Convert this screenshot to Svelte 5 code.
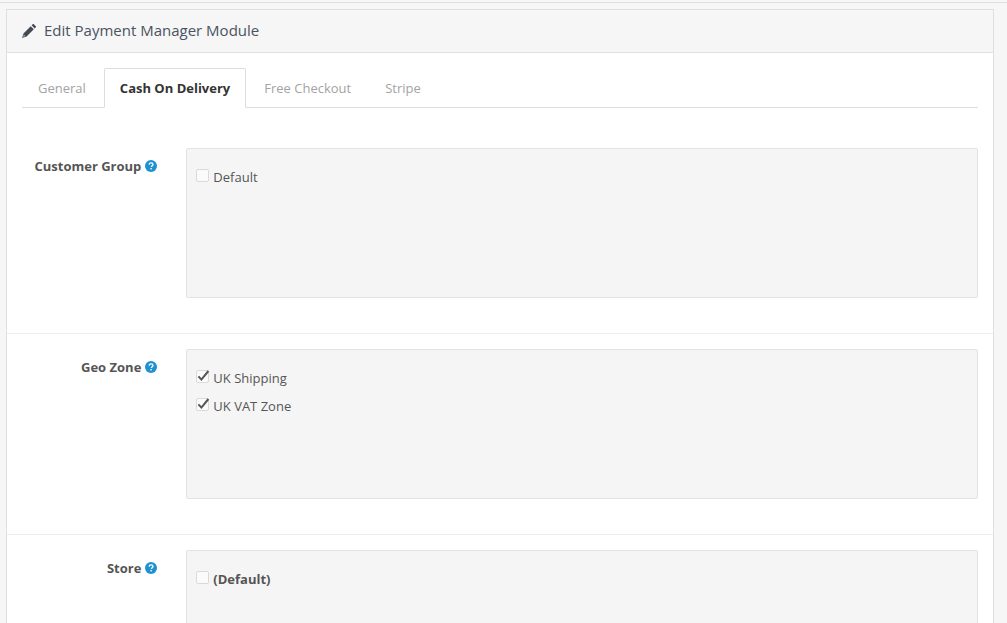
<script>
  const tabs = [
    { label: 'General', active: false },
    { label: 'Cash On Delivery', active: true },
    { label: 'Free Checkout', active: false },
    { label: 'Stripe', active: false }
  ];
  const groups = [
    { label: 'Customer Group', items: [{ text: 'Default', checked: false }] },
    { label: 'Geo Zone', items: [{ text: 'UK Shipping', checked: true }, { text: 'UK VAT Zone', checked: true }] },
    { label: 'Store', items: [{ text: '(Default)', checked: false, bold: true }] }
  ];
</script>

<div class="page">
  <section class="panel">
    <header class="heading">
      <svg class="pencil" viewBox="0 0 14 14" width="14" height="14" aria-hidden="true">
        <path d="M8.7 2.2 11.8 5.3 4.6 12.5 0 14 1.5 9.4zM1.9 10.9 1.3 12.7 3.1 12.1zM9.6 1.3 10.7.2c.3-.3.8-.3 1.1 0l2 2c.3.3.3.8 0 1.1L12.7 4.4z" fill="#444a55" fill-rule="evenodd"/>
      </svg>
      <h3>Edit Payment Manager Module</h3>
    </header>
    <div class="tabs-wrap">
      <ul class="tabs">
        {#each tabs as t}
          <li class:active={t.active}>{t.label}</li>
        {/each}
      </ul>
    </div>
    <div class="form">
      {#each groups as g}
        <div class="group">
          <div class="label">
            <span>{g.label}</span>
            <svg class="help" viewBox="0 0 12 12" width="12" height="12" aria-hidden="true">
              <circle cx="6" cy="6" r="6" fill="#1e91cf"/>
              <path d="M4.1 4.6c.1-1.1.9-1.7 2-1.7s1.9.6 1.9 1.5c0 .7-.4 1.1-1 1.5-.5.3-.6.5-.6 1" fill="none" stroke="#fff" stroke-width="1.3"/>
              <rect x="5.4" y="8" width="1.4" height="1.4" fill="#fff"/>
            </svg>
          </div>
          <div class="well">
            {#each g.items as item}
              <div class="check">
                <span class="box">
                  {#if item.checked}
                    <svg viewBox="0 0 14 14" width="14" height="14" aria-hidden="true">
                      <path d="M2.4 6.4 5.4 9.6 12.4 1" fill="none" stroke="#555" stroke-width="2"/>
                    </svg>
                  {/if}
                </span>
                <span class:bold={item.bold}>{item.text}</span>
              </div>
            {/each}
          </div>
        </div>
      {/each}
    </div>
  </section>
</div>

<style>
  :global(body) {
    margin: 0;
    background: #f6f6f6;
    overflow: hidden;
  }
  .page {
    height: 621px;
    margin-top: 2px;
    border-top: 1px solid #dfdfdf;
    padding: 6px 13px 0 6px;
    box-sizing: border-box;
    overflow: hidden;
    font-family: "Open Sans", sans-serif;
    font-size: 13px;
    color: #555;
  }
  .panel {
    border: 1px solid #dfdfdf;
    border-bottom: 0;
    background: #fff;
  }
  .heading {
    display: flex;
    align-items: center;
    gap: 8px;
    height: 43px;
    padding: 0 15px 2px;
    box-sizing: border-box;
    background: #f6f6f6;
    border-bottom: 1px solid #dfdfdf;
  }
  h3 {
    margin: 0;
    font-size: 15px;
    font-weight: 400;
    color: #4a5361;
  }
  .pencil { margin-top: 1px; }
  .tabs-wrap { padding: 15px 15px 0; }
  .tabs {
    display: flex;
    list-style: none;
    margin: 0;
    padding: 0;
    border-bottom: 1px solid #dddddd;
    height: 39px;
  }
  .tabs li {
    box-sizing: border-box;
    height: 40px;
    padding: 0 15px;
    margin-right: 2px;
    display: flex;
    align-items: center;
    color: #a3a3a3;
    border: 1px solid transparent;
  }
  .tabs li.active {
    background: #fff;
    border-color: #ddd;
    border-bottom-color: #fff;
    border-radius: 2px 2px 0 0;
    color: #333;
    font-weight: 700;
  }
  .form { padding-top: 25px; }
  .group {
    display: grid;
    grid-template-columns: 2fr 10fr;
    padding: 15px 0 35px;
    border-top: 1px solid #ededed;
  }
  .group:first-child { border-top: 0; }
  .label {
    display: flex;
    justify-content: flex-end;
    align-items: center;
    align-self: start;
    gap: 4px;
    padding: 9px 14px 0 0;
    font-weight: 700;
  }
  .help { flex: none; }
  .well {
    box-sizing: border-box;
    height: 150px;
    margin: 0 15px;
    padding: 19px 9px;
    background: #f5f5f5;
    border: 1px solid #e3e3e3;
    border-radius: 2px;
  }
  .check {
    display: flex;
    align-items: center;
    gap: 4px;
    height: 18px;
    margin-bottom: 10px;
    line-height: 18px;
  }
  .box {
    box-sizing: border-box;
    width: 13px;
    height: 13px;
    margin-top: -3px;
    background: #fbfbfb;
    border: 1px solid #dadada;
    border-radius: 2px;
    display: block;
  }
  .box svg { display: block; margin: -1px 0 0 -1px; }
  .bold { font-weight: 700; }
</style>
